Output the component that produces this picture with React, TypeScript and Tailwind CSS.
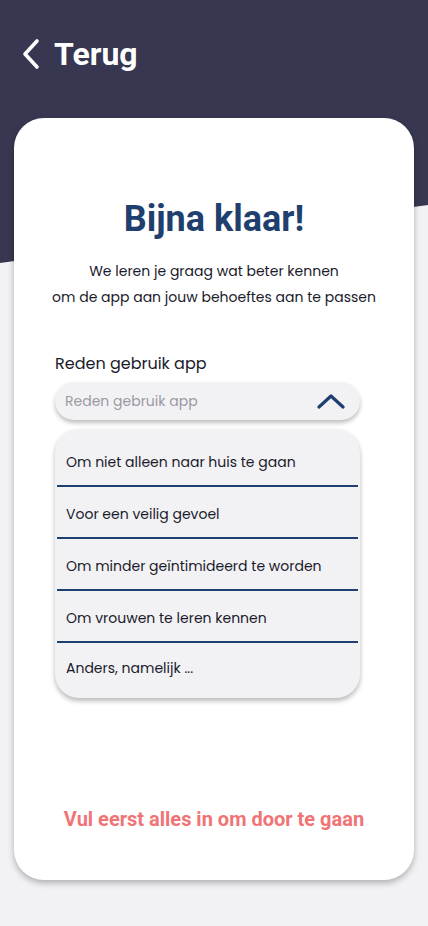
const options = [
  "Om niet alleen naar huis te gaan",
  "Voor een veilig gevoel",
  "Om minder geïntimideerd te worden",
  "Om vrouwen te leren kennen",
  "Anders, namelijk ...",
]

const body = "font-['Poppins','Lato','Noto_Sans',sans-serif]"

function rowClass(i: number) {
  if (i === 0) return "h-[58px] pt-[10px] border-b-2 border-[#1f3f6e]"
  if (i === options.length - 1) return "h-[55px] pb-[5px]"
  return "h-[52px] pt-[4px] border-b-2 border-[#1f3f6e]"
}

export default function App() {
  return (
    <div className="relative min-h-[926px] w-[428px] overflow-hidden bg-[#f2f2f4]">
      {/* dark header shape behind the card */}
      <svg className="absolute left-0 top-0" width="428" height="270" viewBox="0 0 428 270">
        <polygon points="0,0 428,0 428,205 0,263" fill="#383751" />
      </svg>

      <div className="relative flex flex-col">
        <header className="flex h-[118px] items-start pl-[22px] pt-[34px]">
          <button className="flex items-center gap-[14px] text-white">
            <svg width="18" height="32" viewBox="0 0 18 32" fill="none">
              <path d="M15 3 L3 16 L15 29" stroke="white" strokeWidth="3.6" strokeLinecap="round" strokeLinejoin="round" />
            </svg>
            <span className="font-['Roboto',sans-serif] text-[32px] font-bold leading-[40px]">Terug</span>
          </button>
        </header>

        <main className="mx-[14px] flex h-[762px] flex-col rounded-[30px] bg-white shadow-[0_3px_6px_rgba(0,0,0,0.28)]">
          <h1 className="mt-[79px] text-center font-['Roboto',sans-serif] text-[36px] font-bold leading-[44px] text-[#1f3f6e]">
            Bijna klaar!
          </h1>
          <p className={`${body} mt-[17px] text-center text-[14px] leading-[26px] text-[#1b1b2b]`}>
            We leren je graag wat beter kennen
            <br />
            om de app aan jouw behoeftes aan te passen
          </p>

          <div className={`${body} ml-[41px] mr-[54px] mt-[42px] flex flex-col`}>
            <label className="text-[16px] leading-[24px] text-[#1b1b2b]">Reden gebruik app</label>
            <div className="mt-[6px] flex h-[38px] items-center justify-between rounded-full bg-[#f2f2f5] pl-[10px] pr-[15px] shadow-[0_3px_4px_rgba(0,0,0,0.25)]">
              <span className="text-[14px] text-[#9a9aa2]">Reden gebruik app</span>
              <svg width="28" height="16" viewBox="0 0 28 16" fill="none">
                <path d="M2 14 L14 3 L26 14" stroke="#1f3f6e" strokeWidth="3.2" strokeLinecap="round" strokeLinejoin="round" />
              </svg>
            </div>

            <ul className="mt-[9px] flex flex-col rounded-[24px] bg-[#f2f2f5] px-[2px] shadow-[0_3px_5px_rgba(0,0,0,0.28)]">
              {options.map((o, i) => (
                <li key={o} className={`flex items-center px-[9px] text-[14px] text-[#1b1b2b] ${rowClass(i)}`}>
                  {o}
                </li>
              ))}
            </ul>
          </div>

          <p className="mt-auto mb-[46px] text-center font-['Roboto',sans-serif] text-[20px] font-bold text-[#f07476]">
            Vul eerst alles in om door te gaan
          </p>
        </main>
      </div>
    </div>
  )
}
